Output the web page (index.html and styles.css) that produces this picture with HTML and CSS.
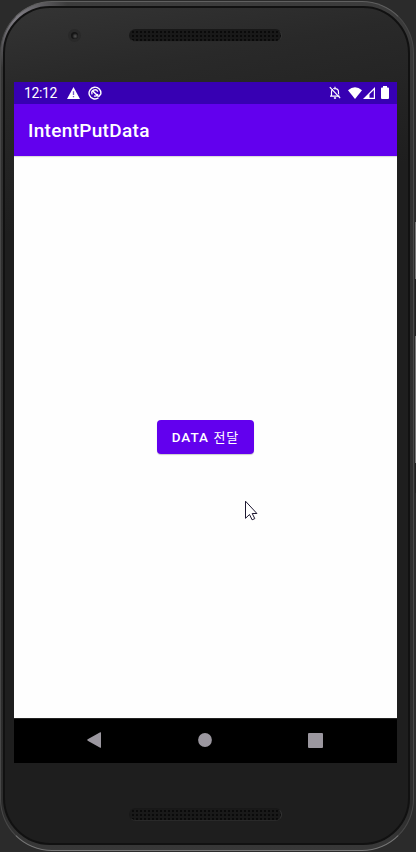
FILE: index.html
```html
<!DOCTYPE html>
<html lang="ko">
<head>
<meta charset="utf-8">
<title>IntentPutData</title>
<link rel="stylesheet" href="styles.css">
</head>
<body>
<div class="phone">
  <div class="face">
    <header class="forehead">
      <span class="camera"></span>
      <span class="speaker"></span>
    </header>
    <main class="screen">
      <div class="status">
        <span class="clock">12:12</span>
        <svg class="warn" width="13" height="12" viewBox="0 0 13 12"><path d="M6.5 0 13 12H0Z" fill="#fff"/><path d="M6.5 4.3v3.8M6.5 9v1.3" stroke="#7657cc" stroke-width="1.3"/></svg>
        <svg class="sync" width="14" height="14" viewBox="0 0 14 14" fill="none" stroke="#fff"><path d="M10.500 11.800A5.900 5.900 0 1 1 12.800 8L10.800 10.500" stroke-width="1.4"/><path d="M4.200 8.400A3.100 3.100 0 0 1 9.800 5.600M9.900 8A3.100 3.100 0 0 1 6 9.900" stroke-width="1.3"/><path d="m4.500 4.700 6.200 6" stroke-width="1.6"/></svg>
        <span class="spacer"></span>
        <svg class="bell" width="12" height="13" viewBox="0 0 12 13" fill="none" stroke="#fff"><path d="M2.500 10V6C2.500 3.700 4 2.600 6 2.600S9.500 4 9.500 6v4M1 10.200h10M6 .8v2" stroke-width="1.2"/><path d="m1.600.5 10.400 11" stroke="#3700b3" stroke-width="1"/><path d="m.8 1.100 10.400 11" stroke-width="1.200"/><path d="M4.900 12h2.200" stroke-width="1.500"/></svg>
        <svg class="wifi" width="14" height="12" viewBox="0 0 14 12"><path d="M0 3.200Q7-2.800 14 3.200L7 12Z" fill="#fff"/></svg>
        <svg class="signal" width="12" height="12" viewBox="0 0 12 12"><path d="M0 12 12 0v12Z" fill="#fff"/><path d="M6.500 7.200 10.800 3v7.800H6.500Z" fill="#3700b3"/></svg>
        <svg class="battery" width="8" height="13" viewBox="0 0 8 13"><path d="M2 0h4v1.500h1q1 0 1 1V12q0 1-1 1H1q-1 0-1-1V2.500q0-1 1-1h1Z" fill="#fff"/></svg>
      </div>
      <div class="appbar"><h1>IntentPutData</h1></div>
      <div class="content"><button class="send" type="button">DATA <span>전달</span></button></div>
      <nav class="navbar">
        <svg width="14" height="16" viewBox="0 0 14 16"><path d="M.7 7.300 13.200.3q.8-.3.8.5v14.400q0 .8-.8.5L.7 8.700q-.9-.7 0-1.400Z" fill="#9b979f"/></svg>
        <svg width="14" height="14" viewBox="0 0 14 14"><circle cx="7" cy="7" r="6.900" fill="#9b979f"/></svg>
        <svg width="15" height="15" viewBox="0 0 15 15"><rect width="15" height="15" rx="1" fill="#9b979f"/></svg>
      </nav>
    </main>
    <footer class="chin"><span class="speaker"></span></footer>
  </div>
</div>
<div class="side"></div>
<svg class="cursor" width="14" height="22" viewBox="0 0 14 22"><path d="M.5 1.200v17.100l4-3.800 2.600 5.300 2.700-1.200-2.600-5.100h4.700Z" fill="#fff" stroke="#1d1730"/></svg>
</body>
</html>
```
FILE: styles.css
```css
* { box-sizing: border-box; }

body {
  display: flow-root;
  position: relative;
  width: 416px;
  height: 852px;
  margin: 0;
  overflow: hidden;
  background: #2b2b2b;
  font-family: Roboto, "Noto Sans CJK KR", sans-serif;
}

.phone {
  width: 414px;
  height: 850px;
  margin: 1px 0;
  padding: 4px 3px 5px 2px;
  border: 1px solid;
  border-color: #606060 #484848 #777 #484848;
  border-radius: 52px;
  background:
    radial-gradient(circle at 12px 12px, #85828a, #85828a00 55px),
    linear-gradient(#3c3c3c, #303030 20%, #2c2c2c 95%, #383838);
}

.face {
  height: 100%;
  padding: 0 0 0 9px;
  border: 2px solid #111;
  border-radius: 47px;
  background: linear-gradient(170deg, #343434, #292929 9%, #1e1e1e 25%, #1e1e1e);
}

.forehead {
  display: flex;
  height: 74px;
  padding: 21px 0 0 54px;
  align-items: flex-start;
}

.camera {
  width: 13px;
  height: 13px;
  border: 3px solid #292929;
  border-radius: 50%;
  background: radial-gradient(circle at 60% 60%, #555, #151515 50%);
}

.speaker {
  display: block;
  width: 153px;
  height: 13px;
  margin-left: 48px;
  border: 1px solid #181818;
  border-right-color: #333;
  border-bottom-color: #292929;
  border-radius: 7px;
  background: radial-gradient(circle, #0a0a0a 0.8px, #191919 1.3px) 1px 0 / 4px 4px;
}

.screen {
  display: flex;
  flex-direction: column;
  width: 383px;
  height: 681px;
  background: #fefefe;
}

.status {
  display: flex;
  flex: 0 0 22px;
  align-items: center;
  padding: 0 8px 0 10px;
  background: #3700b3;
  color: #fff;
}

.status svg { margin-bottom: 1px; }

.clock {
  width: 34px;
  font-size: 14px;
  line-height: 22px;
  letter-spacing: -0.350px;
}

.status .warn { margin-left: 9px; }
.status .sync { margin-left: 8px; }
.spacer { flex: 1; }
.status .wifi { margin-left: 7px; }
.status .signal { margin-left: 1px; }
.status .battery { margin-left: 6px; }

.appbar {
  display: flex;
  flex: 0 0 52px;
  align-items: center;
  padding-left: 14px;
  background: #6200ee;
  color: #fff;
  box-shadow: 0 1px 1px #0002;
}

h1 {
  margin: 2px 0 0;
  font-size: 19px;
  line-height: 22px;
  font-weight: 500;
  letter-spacing: 0.320px;
}

.content {
  display: flex;
  flex: 1;
  align-items: center;
  justify-content: center;
}

.send {
  width: 97px;
  height: 34px;
  padding: 0;
  border: 0;
  border-radius: 4px;
  background: #6200ee;
  color: #fff;
  font: 500 13.500px/34px Roboto, "Noto Sans CJK KR", sans-serif;
  letter-spacing: 1px;
  white-space: nowrap;
  box-shadow: 0 1px 1px #0003;
}

.send span { font-size: 13px; font-weight: 400; }

.navbar {
  display: flex;
  flex: 0 0 45px;
  align-items: center;
  justify-content: space-between;
  padding: 0 74px 1px 73px;
  border-top: 1px solid #222;
  background: #000;
}

.navbar svg { margin-bottom: 1px; }

.chin { padding: 45px 0 0 67px; }

.side {
  position: absolute;
  left: 415px;
  top: 222px;
  width: 1px;
  height: 271px;
  background: linear-gradient(#777 57px, #222 57px 114px, #777 114px 241px, #222 241px);
}

.cursor { position: absolute; left: 245px; top: 500px; }
```
